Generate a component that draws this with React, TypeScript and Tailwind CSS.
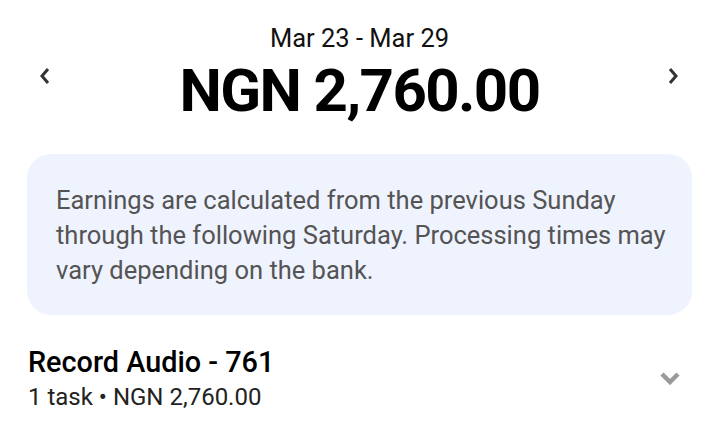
export default function App() {
  return (
    <div className="w-[719px] h-[432px] bg-white overflow-hidden font-['Roboto',sans-serif] text-black">
      {/* Header */}
      <div className="relative flex flex-col items-center pt-[21px]">
        <div className="text-[25.5px] leading-[34px] text-[#111]">Mar 23 - Mar 29</div>
        <div className="text-[60px] leading-[70px] font-bold tracking-[-1.6px] mt-[1px]">NGN 2,760.00</div>
        <svg className="absolute left-[39px] top-[67px]" width="12" height="18" viewBox="0 0 12 18">
          <polyline points="9,2 3,9 9,16" fill="none" stroke="#333" strokeWidth="3" strokeLinejoin="miter" />
        </svg>
        <svg className="absolute left-[667px] top-[67px]" width="12" height="18" viewBox="0 0 12 18">
          <polyline points="3,2 9,9 3,16" fill="none" stroke="#333" strokeWidth="3" strokeLinejoin="miter" />
        </svg>
      </div>

      {/* Info box */}
      <div className="mx-[27px] mt-[28px] rounded-[24px] bg-[#eff3fe] pl-[29px] pr-[12px] pt-[29px] pb-[27px]">
        <p className="text-[25.5px] leading-[35px] text-[#545454]">
          Earnings are calculated from the previous Sunday through the following Saturday. Processing
          times may vary depending on the bank.
        </p>
      </div>

      {/* Task row */}
      <div className="flex items-center justify-between pl-[28px] pr-[38px] mt-[29px]">
        <div>
          <div className="text-[28.8px] leading-[36px] font-medium">Record Audio - 761</div>
          <div className="text-[24px] leading-[34px] text-[#222]">1 task • NGN 2,760.00</div>
        </div>
        <svg className="mt-[-2px]" width="22" height="14" viewBox="0 0 22 14">
          <polyline points="3,3 11,11 19,3" fill="none" stroke="#9a9a9a" strokeWidth="4.5" strokeLinejoin="miter" />
        </svg>
      </div>
    </div>
  );
}
